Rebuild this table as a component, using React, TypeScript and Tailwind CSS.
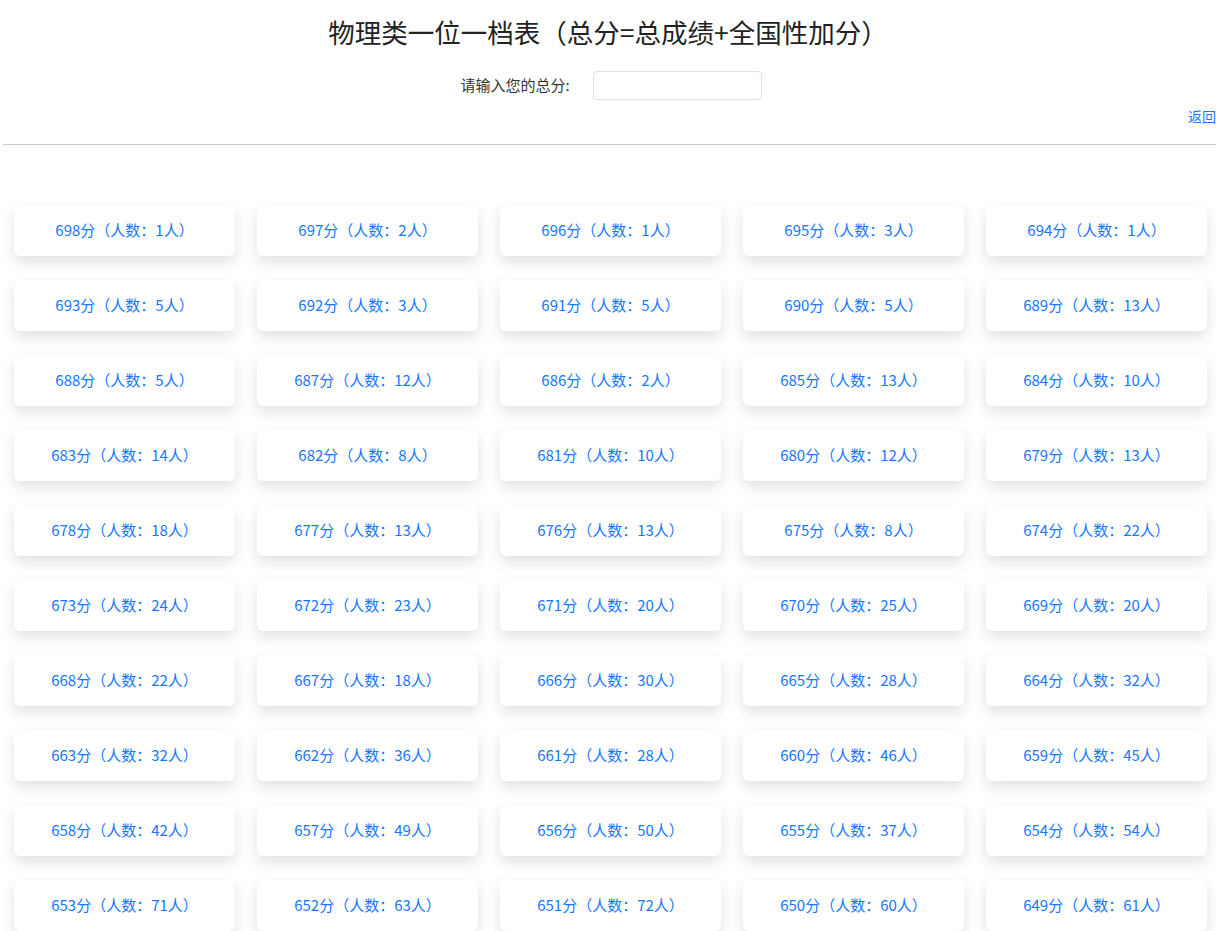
const scores = [
  [698, 1], [697, 2], [696, 1], [695, 3], [694, 1],
  [693, 5], [692, 3], [691, 5], [690, 5], [689, 13],
  [688, 5], [687, 12], [686, 2], [685, 13], [684, 10],
  [683, 14], [682, 8], [681, 10], [680, 12], [679, 13],
  [678, 18], [677, 13], [676, 13], [675, 8], [674, 22],
  [673, 24], [672, 23], [671, 20], [670, 25], [669, 20],
  [668, 22], [667, 18], [666, 30], [665, 28], [664, 32],
  [663, 32], [662, 36], [661, 28], [660, 46], [659, 45],
  [658, 42], [657, 49], [656, 50], [655, 37], [654, 54],
  [653, 71], [652, 63], [651, 72], [650, 60], [649, 61],
  [648, 66], [647, 70], [646, 74], [645, 81], [644, 88],
];

export default function App() {
  return (
    <div className="min-h-screen bg-white font-['Noto_Sans_CJK_SC','Noto_Sans',sans-serif] overflow-hidden">
      <header className="pt-[12px]">
        <h1 className="text-center text-[26.5px] leading-[40px] text-[#222]">
          物理类一位一档表（总分=总成绩+全国性加分）
        </h1>
        <div className="mt-[19px] flex items-center justify-center gap-[23px] pl-[6px]">
          <label className="text-[15px] text-[#333]">请输入您的总分:</label>
          <input
            type="text"
            className="h-[29px] w-[169px] rounded-[4px] border border-[#dcdfe6] bg-white px-2 text-[14px] outline-none"
          />
        </div>
        <div className="mt-[5px] flex justify-end">
          <a href="#" className="text-[14px] leading-[22px] text-[#1677ff]">
            返回
          </a>
        </div>
      </header>
      <hr className="ml-[3px] mt-[17px] border-0 border-t border-[#cccccc]" />
      <main className="grid grid-cols-[repeat(5,221px)] gap-x-[22px] gap-y-[24px] pl-[14px] pt-[60px] pb-10">
        {scores.map(([score, count]) => (
          <div
            key={score}
            className="flex h-[51px] items-center justify-center rounded-[6px] bg-white text-[15px] text-[#1677ff] shadow-[0_6px_14px_rgba(0,0,0,0.12)]"
          >
            {score}分（人数：{count}人）
          </div>
        ))}
      </main>
    </div>
  );
}
